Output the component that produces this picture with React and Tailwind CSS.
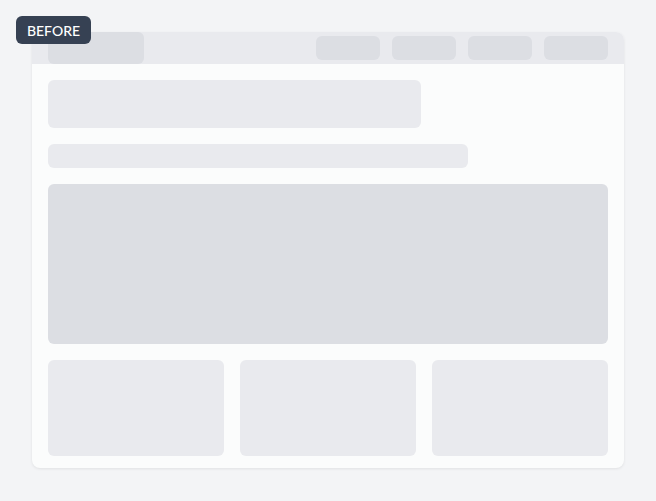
export default function App() {
  return (
    <div className="relative w-[656px] h-[501px] bg-[#f3f4f6] pt-8 pl-8" style={{ fontFamily: "Lato, 'Noto Sans', sans-serif" }}>
      <div className="absolute left-4 top-4 h-7 w-[75px] flex items-center justify-center rounded-md bg-[#364153] text-white text-[14px] font-medium z-10">
        BEFORE
      </div>
      <div className="w-[592px] h-[436px] rounded-lg bg-[#fbfcfc] shadow-[0_1px_3px_rgba(0,0,0,0.08)] overflow-hidden flex flex-col">
        <div className="h-8 bg-[#e9eaee] flex items-center justify-between pl-4 pr-4">
          <div className="w-24 h-8 rounded-md bg-[#dcdee3]" />
          <div className="flex gap-3">
            <div className="w-16 h-6 rounded-md bg-[#dcdee3]" />
            <div className="w-16 h-6 rounded-md bg-[#dcdee3]" />
            <div className="w-16 h-6 rounded-md bg-[#dcdee3]" />
            <div className="w-16 h-6 rounded-md bg-[#dcdee3]" />
          </div>
        </div>
        <div className="flex flex-col gap-4 p-4">
          <div className="w-[373px] h-12 rounded-md bg-[#e9eaee]" />
          <div className="w-[420px] h-6 rounded-md bg-[#e9eaee]" />
          <div className="h-40 rounded-md bg-[#dcdee3]" />
          <div className="grid grid-cols-3 gap-4">
            <div className="h-24 rounded-md bg-[#e9eaee]" />
            <div className="h-24 rounded-md bg-[#e9eaee]" />
            <div className="h-24 rounded-md bg-[#e9eaee]" />
          </div>
        </div>
      </div>
    </div>
  );
}
